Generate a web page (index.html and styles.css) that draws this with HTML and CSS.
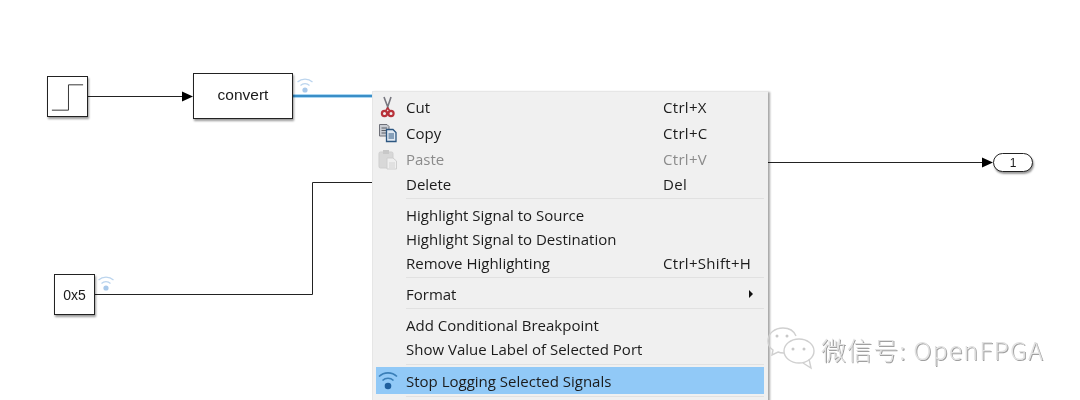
FILE: index.html
```html
<!DOCTYPE html>
<html lang="en">
<head>
<meta charset="utf-8">
<title>Simulink context menu</title>
<link rel="stylesheet" href="styles.css">
</head>
<body>
<main class="canvas">
  <svg class="wires" width="1080" height="400" viewBox="0 0 1080 400">
    <path class="wire" d="M88 96.500H184"/>
    <path class="head" d="M182 91.500L193 96.500L182 101.500Z"/>
    <path class="wire" d="M94 294.500H312.500V182.500H372"/>
    <path class="wire" d="M768 162.500H984"/>
    <path class="head" d="M982 157.500L993 162.500L982 167.500Z"/>
    <path class="logged" d="M293 96H372"/>
    <path class="logged-core" d="M293 96H372"/>
    <g class="signal" transform="translate(305 90)">
      <circle cx="0" cy="0" r="2.600"/>
      <path d="M-4.500 -4.500A6.500 6.500 0 0 1 4.500 -4.500M-7.500 -8A11 11 0 0 1 7.500 -8"/>
    </g>
    <g class="signal" transform="translate(106 288)">
      <circle cx="0" cy="0" r="2.600"/>
      <path d="M-4.500 -4.500A6.500 6.500 0 0 1 4.500 -4.500M-7.500 -8A11 11 0 0 1 7.500 -8"/>
    </g>
  </svg>

  <div class="block step">
    <svg width="40" height="40" viewBox="0 0 40 40"><path class="step-line" d="M4 33.500H21V7.500H36"/></svg>
  </div>
  <div class="block convert"><span class="lift">convert</span></div>
  <div class="block const">0x5</div>
  <div class="block outport">1</div>

  <div class="menu">
    <div class="item tall">
      <span class="ico"><svg width="18" height="22" viewBox="0 0 18 22"><path d="M5 1L9.500 13M12 1L8 13" fill="none" stroke="#77777f" stroke-width="1.600"/><circle cx="5.500" cy="17.500" r="2.600" fill="none" stroke="#b8323a" stroke-width="2.200"/><circle cx="12" cy="17.500" r="2.600" fill="none" stroke="#b8323a" stroke-width="2.200"/><path d="M6.500 15L8.700 12L11 15" fill="none" stroke="#b8323a" stroke-width="1.600"/></svg></span>
      <span class="label">Cut</span><span class="key">Ctrl+X</span>
    </div>
    <div class="item tall">
      <span class="ico"><svg width="20" height="20" viewBox="0 0 20 20"><path d="M1.500 1.500H9L11 3.500V13H1.500Z" fill="#c9ccd2" stroke="#6e7078"/><path d="M3.500 5H9M3.500 7.500H9M3.500 10H9" stroke="#5c6068"/><path d="M8.500 6.500H15L18 9.500V18.500H8.500Z" fill="#dfe8f2" stroke="#2c5680" stroke-width="1.300"/><path d="M10.500 11H16M10.500 13H16M10.500 15H16" stroke="#2c5680"/></svg></span>
      <span class="label">Copy</span><span class="key">Ctrl+C</span>
    </div>
    <div class="item tall off">
      <span class="ico"><svg width="20" height="21" viewBox="0 0 20 21"><rect x="1" y="3" width="14" height="16" rx="1.500" fill="#d8d8d8" stroke="#cfcfcf"/><rect x="5" y="1" width="6" height="4" fill="#c8c8c8"/><path d="M9 9H15L18.500 12V20H9Z" fill="#efefef" stroke="#cfcfcf"/><path d="M11 14H17M11 16H17M11 18H17" stroke="#d2d2d2"/></svg></span>
      <span class="label">Paste</span><span class="key">Ctrl+V</span>
    </div>
    <div class="item"><span class="ico"></span><span class="label">Delete</span><span class="key">Del</span></div>
    <div class="sep"></div>
    <div class="item"><span class="ico"></span><span class="label">Highlight Signal to Source</span></div>
    <div class="item"><span class="ico"></span><span class="label">Highlight Signal to Destination</span></div>
    <div class="item"><span class="ico"></span><span class="label">Remove Highlighting</span><span class="key">Ctrl+Shift+H</span></div>
    <div class="sep"></div>
    <div class="item"><span class="ico"></span><span class="label">Format</span><span class="arrow"></span></div>
    <div class="sep"></div>
    <div class="item"><span class="ico"></span><span class="label">Add Conditional Breakpoint</span></div>
    <div class="item"><span class="ico"></span><span class="label">Show Value Label of Selected Port</span></div>
    <div class="sep before-active"></div>
    <div class="item active">
      <span class="ico"><svg width="22" height="20" viewBox="0 0 22 20"><circle cx="11" cy="15" r="3.300" fill="#1f5f9e"/><path d="M5.500 9.500A8 8 0 0 1 16.500 9.500M2 5.500A13 13 0 0 1 20 5.500" fill="none" stroke="#3a7fb8" stroke-width="1.600"/></svg></span>
      <span class="label">Stop Logging Selected Signals</span>
    </div>
    <div class="sep"></div>
  </div>

  <div class="mark">
    <svg width="54" height="48" viewBox="0 0 54 48"><path class="bubble" d="M16 3C8 3 1 8 1 16C1 20 3 23 6 25L5 30L11 27C13 28 15 28 17 28" /><path class="bubble" d="M16 3C22 3 27 6 29 11"/><ellipse class="bubble" cx="32" cy="26" rx="15" ry="12"/><path class="bubble" d="M36 38L44 43L42 34"/><circle class="dot" cx="10" cy="11" r="1.500"/><circle class="dot" cx="20" cy="11" r="1.500"/><circle class="dot" cx="26" cy="24" r="1.500"/><circle class="dot" cx="37" cy="24" r="1.500"/></svg>
    <span class="mark-text">微信号: OpenFPGA</span>
  </div>
</main>
</body>
</html>
```
FILE: styles.css
```css
html, body {
  margin: 0;
  padding: 0;
  background: #fff;
}

.canvas {
  position: relative;
  width: 1080px;
  height: 400px;
  overflow: hidden;
  font-family: "Liberation Sans", Arial, sans-serif;
  color: #1a1a1a;
  filter: blur(0.35px);
}

.wires {
  position: absolute;
  left: 0;
  top: 0;
}

.wire {
  fill: none;
  stroke: #222;
  stroke-width: 1;
}

.head {
  fill: #000;
}

.logged {
  fill: none;
  stroke: #57aee6;
  stroke-width: 3;
}

.logged-core {
  fill: none;
  stroke: #1e6fa8;
  stroke-width: 1;
}

.signal circle {
  fill: #a9c9ea;
}

.signal path {
  fill: none;
  stroke: #bcd5ee;
  stroke-width: 1.200;
}

.block {
  position: absolute;
  box-sizing: border-box;
  display: flex;
  align-items: center;
  justify-content: center;
  background: #fff;
  border: 1px solid #222;
  box-shadow: 1px 2px 2px rgba(0, 0, 0, 0.4);
  font-size: 14px;
}

.step {
  left: 47px;
  top: 76px;
  width: 41px;
  height: 41px;
}

.step-line {
  fill: none;
  stroke: #333;
  stroke-width: 1;
}

.convert {
  left: 193px;
  top: 73px;
  width: 100px;
  height: 46px;
  font-size: 15.500px;
}

.lift {
  margin-bottom: 2px;
}

.const {
  left: 54px;
  top: 274px;
  width: 41px;
  height: 41px;
  font-size: 14px;
}

.outport {
  left: 993px;
  top: 153px;
  width: 40px;
  height: 19px;
  border-radius: 10px;
  font-size: 12px;
}

.menu {
  position: absolute;
  left: 372px;
  top: 91px;
  width: 396px;
  height: 320px;
  box-sizing: border-box;
  padding: 2px 4px 0 3px;
  background: #f0f0f0;
  border-top: 1px solid #e6e6e6;
  border-left: 1px solid #e6e6e6;
  box-shadow: 2px 1px 2px rgba(0, 0, 0, 0.35);
  font-family: "Open Sans", "Noto Sans", sans-serif;
  font-size: 15px;
  color: #1b1b1b;
}

.item {
  display: flex;
  align-items: center;
  height: 24px;
}

.tall {
  height: 26px;
}

.ico {
  flex: none;
  width: 30px;
  display: flex;
  align-items: center;
  justify-content: center;
  padding-right: 6px;
  box-sizing: border-box;
}

.label {
  flex: none;
  width: 257px;
  white-space: nowrap;
}

.key {
  white-space: nowrap;
  letter-spacing: 0.300px;
}

.off {
  color: #8b8b8b;
}

.arrow {
  margin-left: 86px;
  width: 0;
  height: 0;
  border-left: 4px solid #111;
  border-top: 4px solid transparent;
  border-bottom: 4px solid transparent;
}

.sep {
  height: 1px;
  margin: 2px 0 4px 30px;
  background: #e1e1e1;
}

.sep.before-active {
  margin-top: 3px;
  margin-bottom: 2px;
}

.active {
  height: 27px;
  background: #91c9f7;
}

.mark {
  position: absolute;
  left: 767px;
  top: 325px;
  display: flex;
  align-items: center;
}

.bubble {
  fill: none;
  stroke: #d0d0d0;
  stroke-width: 1.400;
}

.dot {
  fill: #c9c9c9;
}

.mark-text {
  font-family: "Noto Sans CJK SC", "Noto Sans", sans-serif;
  font-weight: 300;
  font-size: 25px;
  letter-spacing: 1.100px;
  color: #e2e2e2;
  text-shadow: 1px 1px 0 #a0a0a0;
  white-space: nowrap;
}
```
